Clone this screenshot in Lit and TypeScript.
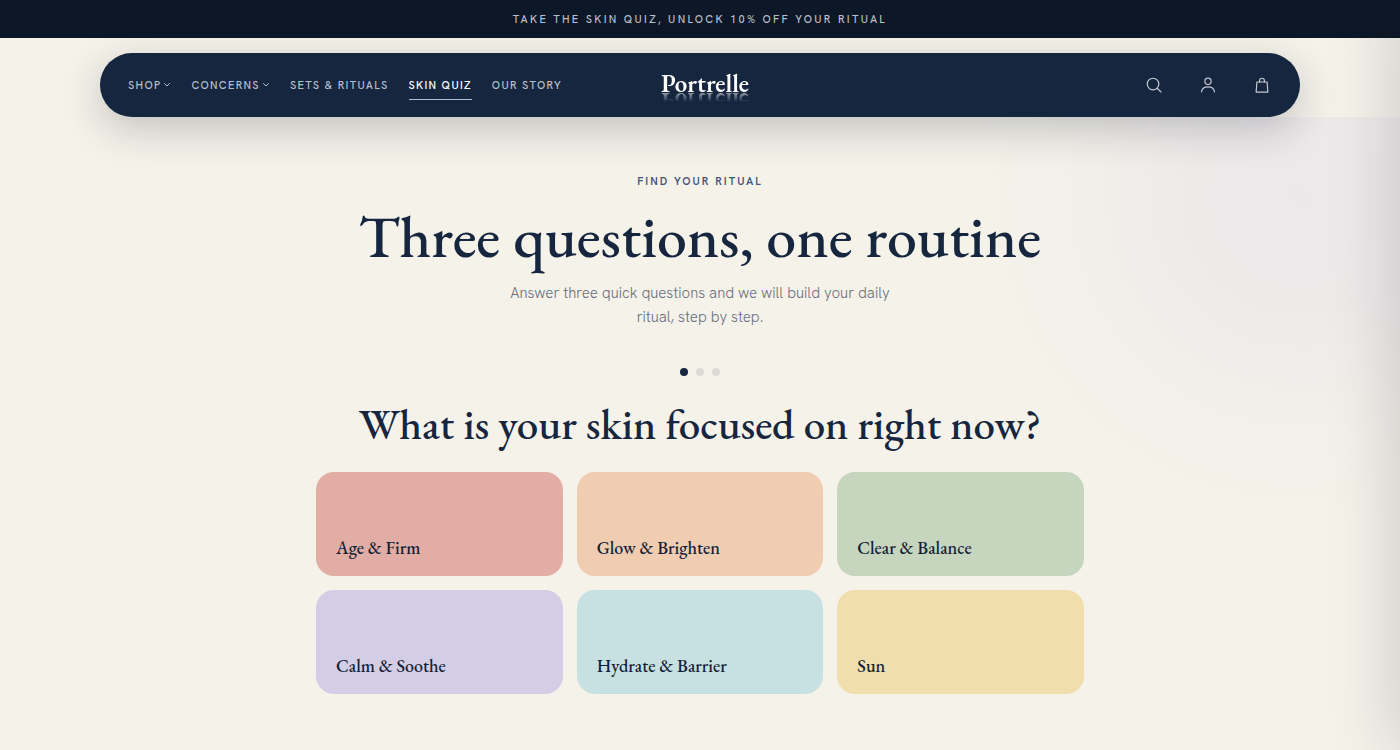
import { LitElement, html, css, svg } from "lit";
import { customElement, state } from "lit/decorators.js";
import { classMap } from "lit/directives/class-map.js";

const NAV = [
  { label: "Shop", menu: true },
  { label: "Concerns", menu: true },
  { label: "Sets & Rituals" },
  { label: "Skin Quiz", active: true },
  { label: "Our Story" },
];

const OPTIONS = [
  { label: "Age & Firm", tone: "rose" },
  { label: "Glow & Brighten", tone: "peach" },
  { label: "Clear & Balance", tone: "sage" },
  { label: "Calm & Soothe", tone: "lilac" },
  { label: "Hydrate & Barrier", tone: "aqua" },
  { label: "Sun", tone: "butter" },
];

const ICONS = [
  { name: "Search", shape: svg`<circle cx="10.700" cy="10.700" r="7.700"></circle><path d="M16.300 16.300 21.300 21.300"></path>` },
  { name: "Account", shape: svg`<circle cx="12" cy="7" r="4.200"></circle><path d="M3.300 21.200c.7-4 4.200-6.600 8.700-6.600s8 2.600 8.700 6.600"></path>` },
  { name: "Bag", shape: svg`<path d="M5.200 8h13.600l1 13.400H4.200L5.200 8Z"></path><path d="M8.800 8V6.200a3.200 3.200 0 0 1 6.400 0V8"></path>` },
];

@customElement("app-root")
export class AppRoot extends LitElement {
  @state() private step = 0;

  static styles = css`
    :host {
      --navy: #16263f;
      --sans: "Hanken Grotesk", "HK Grotesk", Lato, "Liberation Sans", sans-serif;
      --serif: "EB Garamond", "Liberation Serif", serif;
      display: block;
      min-height: 100vh;
      background: #f5f2ea;
      color: var(--navy);
      font-family: var(--sans);
    }
    * { box-sizing: border-box; }
    a { color: inherit; text-decoration: none; }
    h1, h2, p { margin: 0; }
    h1, h2 { font-family: var(--serif); font-weight: 500; }

    .banner {
      background: #0c1728;
      color: #b9bdc6;
      padding: 11px 20px;
      font-size: 11px;
      font-weight: 500;
      line-height: 16px;
      letter-spacing: 0.21em;
      text-align: center;
      text-transform: uppercase;
    }
    .header { padding: 15px 20px 0; position: relative; z-index: 1; }
    .nav {
      display: grid;
      grid-template-columns: 1fr auto 1fr;
      align-items: center;
      max-width: 1200px;
      height: 64px;
      margin: 0 auto;
      padding: 0 28px;
      border-radius: 32px;
      background: var(--navy);
      box-shadow: 0 12px 40px rgba(12, 23, 40, 0.22);
    }
    .links { display: flex; gap: 20px; }
    .link {
      display: flex;
      align-items: center;
      gap: 2px;
      padding: 6px 0;
      border-bottom: 1px solid transparent;
      color: #b9bec8;
      font-size: 11px;
      font-weight: 500;
      line-height: 16px;
      letter-spacing: 0.12em;
      text-transform: uppercase;
      white-space: nowrap;
    }
    .link.active { color: #fff; border-color: #b4bccb; }
    .chevron { width: 8px; height: 8px; stroke-width: 1; }
    .logo {
      margin: 0 0 4px 10px;
      color: #fff;
      font: 600 25px/24px var(--serif);
      -webkit-box-reflect: below -5px linear-gradient(transparent 50%, rgba(255, 255, 255, 0.7));
    }
    .tools { display: flex; justify-content: flex-end; gap: 34px; }
    .tool {
      display: grid;
      place-items: center;
      width: 20px;
      height: 20px;
      padding: 0;
      border: 0;
      background: none;
      color: #c3c8d2;
      cursor: pointer;
    }
    .icon { width: 18px; height: 18px; }
    svg {
      fill: none;
      stroke: currentColor;
      stroke-width: 1.6;
      stroke-linecap: round;
      stroke-linejoin: round;
    }

    .quiz {
      position: relative;
      overflow: hidden;
      min-height: calc(100vh - 117px);
      padding: 56px 20px;
      text-align: center;
    }
    .glow {
      position: absolute;
      top: -250px;
      right: -230px;
      width: 660px;
      height: 660px;
      border-radius: 50%;
      background: radial-gradient(closest-side, rgba(222, 216, 234, 0.36), rgba(222, 216, 234, 0.3) 35%, rgba(222, 216, 234, 0.08) 72%, transparent);
      pointer-events: none;
    }
    .inner { position: relative; max-width: 768px; margin: 0 auto; }
    .eyebrow {
      color: #3d5680;
      font-size: 11px;
      font-weight: 600;
      line-height: 16px;
      letter-spacing: 2px;
      text-transform: uppercase;
    }
    h1 { margin-top: 15px; font-size: 60px; line-height: 64px; }
    .lead {
      max-width: 400px;
      margin: 13px auto 0;
      color: #6b717e;
      font-size: 15px;
      font-weight: 300;
      line-height: 24px;
    }
    .dots { display: flex; justify-content: center; gap: 8px; margin-top: 39px; }
    .dot { width: 8px; height: 8px; border-radius: 50%; background: #dcd9d6; }
    .dot.on { background: var(--navy); }
    h2 { margin-top: 24px; font-size: 43px; line-height: 48px; }
    .options {
      display: grid;
      grid-template-columns: repeat(3, 1fr);
      gap: 14px;
      margin-top: 24px;
    }
    .option {
      display: flex;
      align-items: flex-end;
      min-height: 104px;
      padding: 16px 20px;
      border: 0;
      border-radius: 18px;
      color: #131f38;
      font: 500 18px/24px var(--serif);
      text-align: left;
      cursor: pointer;
    }
    .rose { background: #e2ada4; }
    .peach { background: #f0ccb1; }
    .sage { background: #c6d5be; }
    .lilac { background: #d4cde6; }
    .aqua { background: #c7e0e2; }
    .butter { background: #f0dfac; }

    .drawer {
      position: fixed;
      z-index: 2;
      top: 0;
      bottom: 0;
      left: 100%;
      width: 400px;
      box-shadow: -8px 0 60px rgba(12, 23, 40, 0.17);
      pointer-events: none;
    }
  `;

  render() {
    return html`
      <div class="banner">Take the skin quiz, unlock 10% off your ritual</div>
      <header class="header">
        <nav class="nav">
          <div class="links">
            ${NAV.map((n) => html`
              <a href="#" class=${classMap({ link: true, active: !!n.active })}>${n.label}${n.menu
                ? html`<svg class="chevron" viewBox="0 0 8 8" aria-hidden="true"><path d="m1.500 2.500 2.500 2.500 2.500-2.500"></path></svg>`
                : null}</a>`)}
          </div>
          <a class="logo" href="#">Portrelle</a>
          <div class="tools">
            ${ICONS.map((i) => html`
              <button class="tool" aria-label=${i.name}>
                <svg class="icon" viewBox="0 0 24 24" aria-hidden="true">${i.shape}</svg>
              </button>`)}
          </div>
        </nav>
      </header>
      <main class="quiz">
        <div class="glow"></div>
        <div class="inner">
          <p class="eyebrow">Find your ritual</p>
          <h1>Three questions, one routine</h1>
          <p class="lead">Answer three quick questions and we will build your daily ritual, step by step.</p>
          <div class="dots">
            ${[0, 1, 2].map((i) => html`<span class=${classMap({ dot: true, on: i === this.step })}></span>`)}
          </div>
          <h2>What is your skin focused on right now?</h2>
          <div class="options">
            ${OPTIONS.map((o) => html`<button class="option ${o.tone}">${o.label}</button>`)}
          </div>
        </div>
      </main>
      <div class="drawer"></div>
    `;
  }
}
